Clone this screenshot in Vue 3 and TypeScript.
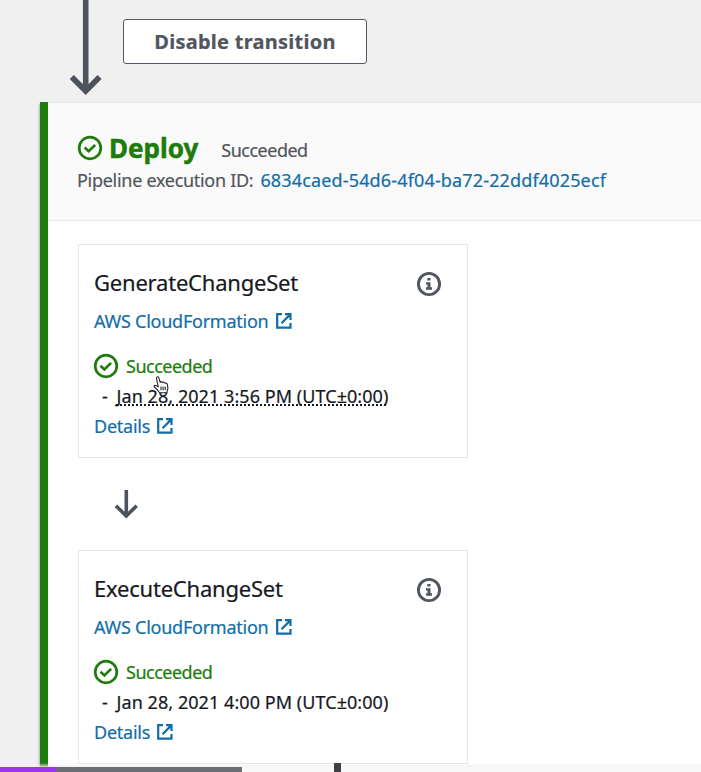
<script setup lang="ts">
interface Action {
  name: string
  provider: string
  status: string
  time: string
  hovered: boolean
}

const actions: Action[] = [
  { name: 'GenerateChangeSet', provider: 'AWS CloudFormation', status: 'Succeeded', time: 'Jan 28, 2021 3:56 PM (UTC±0:00)', hovered: true },
  { name: 'ExecuteChangeSet', provider: 'AWS CloudFormation', status: 'Succeeded', time: 'Jan 28, 2021 4:00 PM (UTC±0:00)', hovered: false },
]
</script>

<template>
  <main class="page">
    <section class="transition">
      <svg class="long-arrow" width="32" height="96" viewBox="0 0 32 96">
        <path d="M15.700 0V90M1.800 77L15.700 91L29.600 77" />
      </svg>
      <button class="disable" type="button">Disable transition</button>
    </section>

    <section class="stage">
      <header class="stage-head">
        <div class="stage-title">
          <svg class="check" width="26" height="26" viewBox="0 0 26 26">
            <circle cx="13" cy="13" r="10.800" /><path d="M7.700 12.600L11.600 16.200L18.200 9.900" />
          </svg>
          <h2>Deploy</h2>
          <span class="stage-status succeeded">Succeeded</span>
        </div>
        <div class="execution">
          <span class="label">Pipeline execution ID:</span><a class="id">6834caed-54d6-4f04-ba72-22ddf4025ecf</a>
        </div>
      </header>

      <div class="stage-body">
        <template v-for="(action, i) in actions" :key="action.name">
          <svg v-if="i > 0" class="short-arrow" width="24" height="30" viewBox="0 0 24 30">
            <path d="M12.300 0V26M1.900 15.700L12.300 26L22.700 15.700" />
          </svg>
          <article class="card">
            <div class="card-head">
              <h3>{{ action.name }}</h3>
              <svg class="info" width="26" height="26" viewBox="0 0 26 26">
                <circle cx="13" cy="13" r="10.600" />
                <path d="M11.300 7H14.500V9.600H11.300ZM10 11.200H14.500V16.300H16V18.800H10V16.300H11.500V13.600H10Z" />
              </svg>
            </div>
            <a class="link provider">
              <span>{{ action.provider }}</span>
              <svg width="16" height="16" viewBox="0 0 16 16"><path d="M6 1.200H1.200V14.600H14.500V10M9 1.200H14.500V7M14.300 1.400L5.500 10.200" /></svg>
            </a>
            <div class="status">
              <svg class="check" width="26" height="26" viewBox="0 0 26 26">
                <circle cx="13" cy="13" r="10.800" /><path d="M7.500 12.800L11.400 16.400L18.100 9.900" />
              </svg>
              <span class="succeeded">{{ action.status }}</span>
            </div>
            <div class="time">
              <span class="dash">-</span><span class="stamp" :class="{ dotted: action.hovered }">{{ action.time }}</span>
            </div>
            <a class="link details">
              <span>Details</span>
              <svg width="16" height="16" viewBox="0 0 16 16"><path d="M6 1.200H1.200V14.600H14.500V10M9 1.200H14.500V7M14.300 1.400L5.500 10.200" /></svg>
            </a>
          </article>
        </template>
      </div>
    </section>

    <svg class="cursor" width="18" height="18" viewBox="0 0 18 18">
      <path d="M5.200 10.500L3.500 2.600Q3.300 1 4.500 .8Q5.600 .7 6 2.200L7.200 6.200Q8.700 5 9.600 6.500Q11 5.500 12 7.200Q14.200 6.600 14.500 9L14.900 12.300L13.800 16.800H6.500L4.700 14.200L1.200 10.600Q.8 9.300 2.200 9.200Z" />
      <path d="M8 10.500V14.200M10.100 10.500V14.200M12.200 10.500V14.200" />
    </svg>

    <footer class="player">
      <div class="track"><i class="played"></i><i class="buffered"></i></div>
      <i class="marker"></i>
    </footer>
  </main>
</template>

<style>
body { margin: 0; overflow: hidden; }
</style>

<style scoped>
.page {
  position: relative;
  width: 701px;
  height: 772px;
  overflow: hidden;
  background: #f0f0f0;
  color: #16191f;
  font: 18px/30px "Noto Sans", sans-serif;
  -webkit-text-stroke: .2px currentColor;
}
svg { display: block; flex: none; }
.transition { display: flex; height: 102px; padding-left: 70px; box-sizing: border-box; }
.long-arrow, .short-arrow { fill: none; stroke: #4d535c; stroke-width: 5.600; }
.disable {
  width: 244px;
  height: 45px;
  margin: 19px 0 0 21px;
  padding: 0;
  border: 1px solid #545b64;
  border-radius: 3px;
  background: #fff;
  color: #51565e;
  font: 700 20px "Noto Sans", sans-serif;
  letter-spacing: .26px;
}
.stage {
  height: 670px;
  margin-left: 40px;
  border-left: 8px solid #1d7c0c;
  background: #fff;
  box-shadow: -1px 2px 2px #0004;
}
.stage-head {
  height: 119px;
  box-sizing: border-box;
  padding: 29px 0 0 29px;
  border: solid #e6e7e7;
  border-width: 1px 0;
  background: #fafafa;
  color: #51565e;
}
.stage-title { display: flex; align-items: center; height: 32px; }
.check { fill: none; stroke: #1d7c0c; stroke-width: 2.700; }
h2, h3 { margin: 0; }
h2 { margin-left: 6px; color: #1d7c0c; font-size: 26px; -webkit-text-stroke-width: .5px; }
.succeeded { letter-spacing: -.5px; }
.stage-status { margin: 3px 0 0 23px; }
.execution { display: flex; padding-top: 1px; }
.label { letter-spacing: -.29px; }
.id { margin-left: 7px; color: #126ea8; letter-spacing: .15px; }
.stage-body { display: flex; flex-direction: column; align-items: flex-start; padding: 23px 0 0 30px; }
.card { width: 390px; height: 214px; box-sizing: border-box; padding: 22px 15px; border: 1px solid #e6e6e6; }
.card-head { display: flex; justify-content: space-between; padding-right: 10px; }
h3 { font-size: 22px; font-weight: 400; letter-spacing: -.21px; }
.info { margin-top: 4px; fill: none; stroke: #51565e; stroke-width: 2.900; }
.info path { fill: #51565e; stroke: none; }
.link { display: flex; align-items: center; gap: 7.500px; color: #126ea8; letter-spacing: -.25px; }
.link svg { margin-top: -1px; fill: none; stroke: currentColor; stroke-width: 2.200; }
.details { gap: 6.500px; }
.provider { margin-top: 9px; }
.status { display: flex; align-items: center; gap: 7px; margin: 15px 0 0 -1px; color: #1d7c0c; }
.time { display: flex; padding-left: 8px; }
.dash { width: 14.500px; }
.stamp { letter-spacing: .06px; }
.dotted { text-decoration: underline dotted 2px; text-underline-offset: .5px; text-decoration-skip-ink: none; }
.short-arrow { margin: 32px 0 30px 36px; stroke-width: 3.600; }
.cursor { position: absolute; left: 153px; top: 376px; fill: #fff; stroke: #222; stroke-width: 1.100; }
.player {
  position: absolute;
  inset: auto 0 0;
  height: 9px;
  background: linear-gradient(#f6f6f600, #f1f1f1cc 40%, #f8f8f8 50%);
}
.track { display: flex; height: 5px; padding-top: 4px; }
.played { width: 56px; background: #9d34f0; }
.buffered { width: 186px; background: #6b6f74; }
.marker { position: absolute; left: 334px; top: 0; width: 7px; height: 9px; background: #3d4045; }
</style>
